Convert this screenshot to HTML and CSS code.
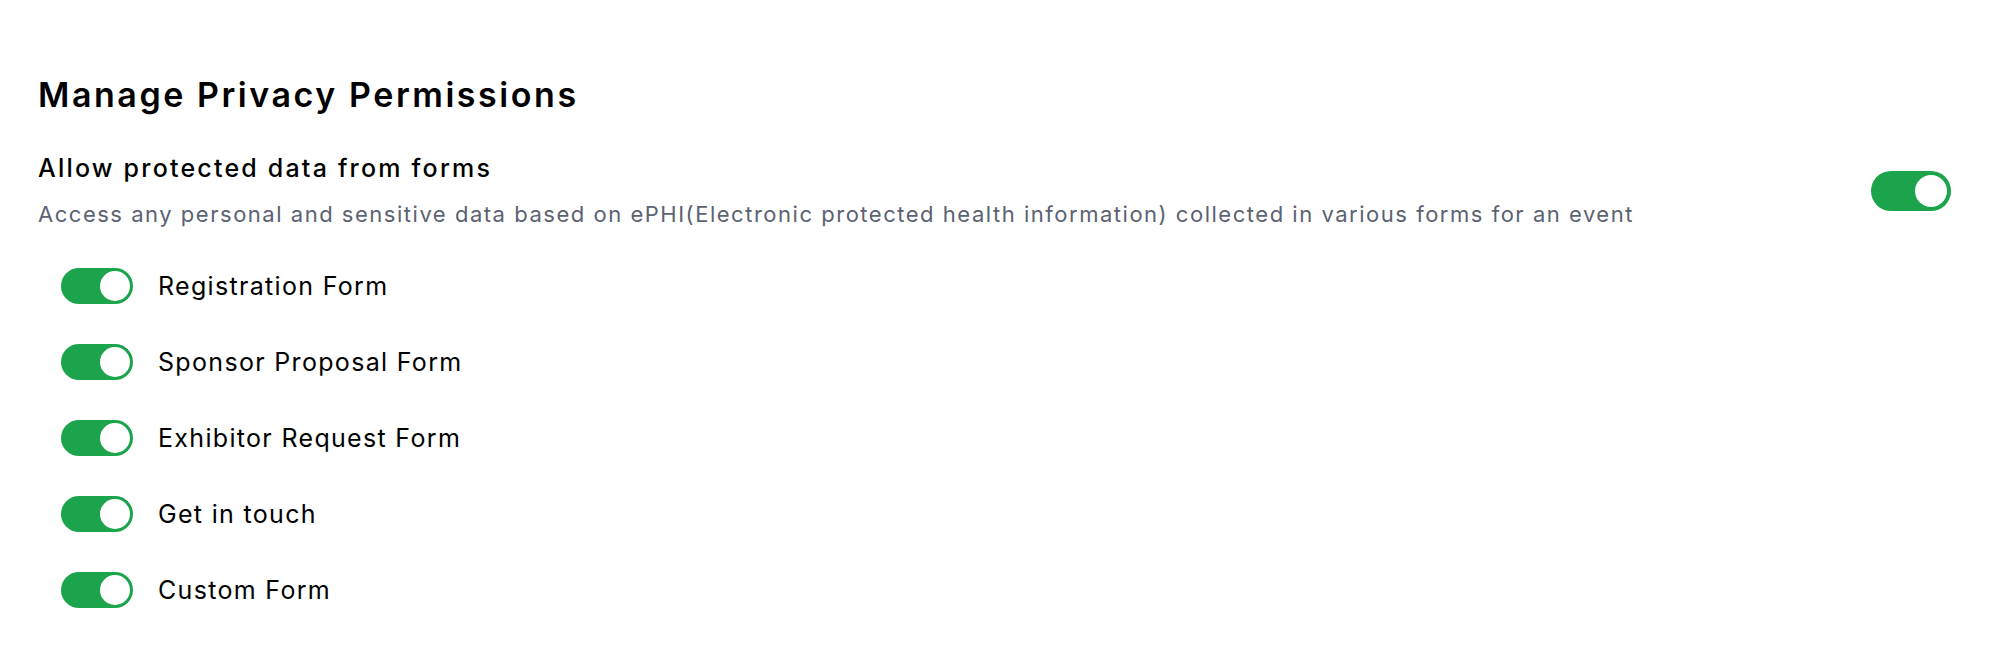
FILE: index.html
```html
<!DOCTYPE html>
<html lang="en">
<head>
<meta charset="utf-8">
<title>Manage Privacy Permissions</title>
<link rel="stylesheet" href="styles.css">
</head>
<body>
<main class="page">
  <h1 class="title">Manage Privacy Permissions</h1>
  <section class="header">
    <div class="header-text">
      <h2 class="subtitle">Allow protected data from forms</h2>
      <p class="desc">Access any personal and sensitive data based on ePHI(Electronic protected health information) collected in various forms for an event</p>
    </div>
    <span class="toggle toggle-lg on"><span class="knob"></span></span>
  </section>
  <ul class="list">
    <li class="item"><span class="toggle on"><span class="knob"></span></span><span class="label">Registration Form</span></li>
    <li class="item"><span class="toggle on"><span class="knob"></span></span><span class="label">Sponsor Proposal Form</span></li>
    <li class="item"><span class="toggle on"><span class="knob"></span></span><span class="label">Exhibitor Request Form</span></li>
    <li class="item"><span class="toggle on"><span class="knob"></span></span><span class="label">Get in touch</span></li>
    <li class="item"><span class="toggle on"><span class="knob"></span></span><span class="label">Custom Form</span></li>
  </ul>
</main>
</body>
</html>
```
FILE: styles.css
```css
html, body {
  margin: 0;
  padding: 0;
  background: #ffffff;
}
body {
  font-family: "Inter", "Liberation Sans", sans-serif;
  color: #000000;
}
.page {
  padding: 75px 53px 0 38px;
}
.title {
  margin: 0;
  font-size: 34px;
  line-height: 40px;
  font-weight: 600;
  letter-spacing: 2.55px;
  color: #000;
}
.header {
  margin-top: 37px;
  display: flex;
  align-items: center;
  justify-content: space-between;
}
.subtitle {
  margin: 0;
  font-size: 25px;
  line-height: 32px;
  font-weight: 500;
  letter-spacing: 2.2px;
  color: #000;
}
.desc {
  margin: 15px 0 0 0;
  font-size: 22px;
  line-height: 30px;
  letter-spacing: 1.52px;
  color: #5b6272;
}
.list {
  list-style: none;
  margin: 39px 0 0 0;
  padding: 0 0 0 23px;
  display: flex;
  flex-direction: column;
  gap: 40px;
}
.item {
  display: flex;
  align-items: center;
  gap: 25px;
  height: 36px;
}
.label {
  font-size: 25px;
  line-height: 36px;
  letter-spacing: 1.32px;
  color: #000;
}
.toggle {
  display: flex;
  align-items: center;
  justify-content: flex-end;
  box-sizing: border-box;
  width: 72px;
  height: 36px;
  padding: 3px;
  border-radius: 18px;
  background: #1ba44b;
  flex: none;
}
.toggle .knob {
  width: 30px;
  height: 30px;
  border-radius: 50%;
  background: #ffffff;
}
.toggle-lg {
  width: 80px;
  height: 40px;
  padding: 4px;
  border-radius: 20px;
}
.toggle-lg .knob {
  width: 32px;
  height: 32px;
}
```
